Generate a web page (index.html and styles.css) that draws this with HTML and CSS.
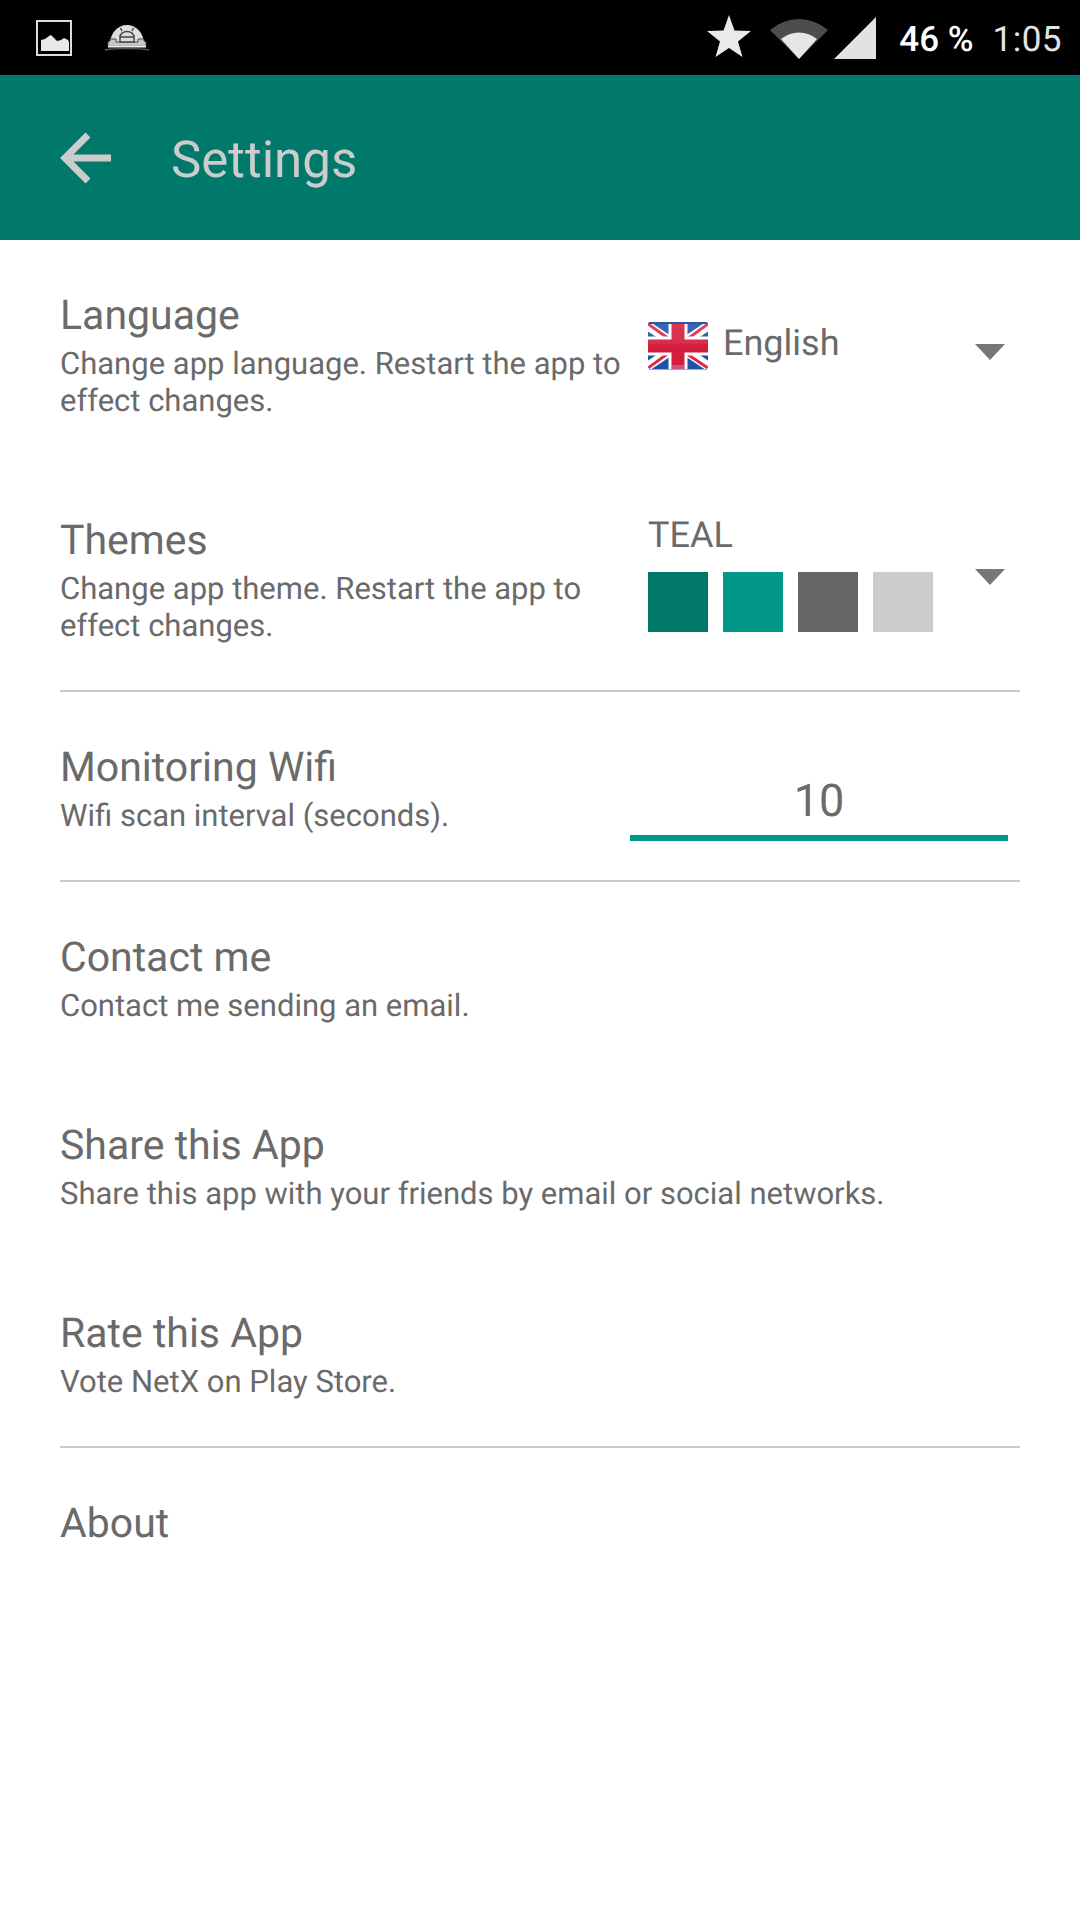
FILE: index.html
```html
<!DOCTYPE html>
<html lang="en">
<head>
<meta charset="utf-8">
<title>Settings</title>
<link rel="stylesheet" href="styles.css">
</head>
<body>
<div class="screen">
  <header class="status">
    <div class="status-left">
      <svg class="ic-pic" width="36" height="36" viewBox="0 0 36 36"><rect x="1" y="1" width="34" height="34" fill="none" stroke="#dcdcdc" stroke-width="2"/><path d="M5 31V20l4-1 4-3 2-1 4 4 2 2 4-1 3-2 4 2 1 2v9z" fill="#e8e8e8"/></svg>
      <svg class="ic-dome" width="46" height="26" viewBox="0 0 46 26">
        <path d="M6 19a17 19 0 0 1 34 0z" fill="#e0e0e0"/>
        <path d="M4 21v-4l2-1v-2h6v3h22v-3h6v2l2 1v4z" fill="#c8c8c8" stroke="#444" stroke-width="1"/>
        <path d="M16 17v-5a7 5.500 0 0 1 14 0v5z" fill="#dcdcdc" stroke="#444" stroke-width="1.500"/>
        <path d="M18 6l-1.500-3M28 6l1.500-3M16 12h14" stroke="#444" stroke-width="1.500" fill="none"/>
        <path d="M4 21.500h38" stroke="#eee" stroke-width="2"/>
        <path d="M1 25c10-2 34-2 44 0" fill="none" stroke="#555" stroke-width="1.500"/>
      </svg>
    </div>
    <div class="status-right">
      <svg class="ic-star" width="44" height="42" viewBox="0 0 44 42"><path d="M22 0l5.500 15.500L44 16 31 26.500 35.500 42 22 33 8.500 42 13 26.500 0 16l16.500-.5z" fill="#eaeaea"/></svg>
      <svg class="ic-wifi" width="58" height="42" viewBox="0 0 58 42"><path d="M0 13a44 44 0 0 1 58 0L29 42z" fill="#4d4d4d"/><path d="M11 22a28 28 0 0 1 36 0L29 42z" fill="#e6e6e6"/></svg>
      <svg class="ic-signal" width="42" height="42" viewBox="0 0 42 42"><path d="M42 0v42H0z" fill="#e2e2e2"/></svg>
      <span class="battery">46 %</span>
      <span class="clock">1:05</span>
    </div>
  </header>
  <div class="appbar">
    <svg class="back" width="52" height="52" viewBox="0 0 52 52"><path d="M51 26H6M28 3L5 26l23 23" fill="none" stroke="#cccccc" stroke-width="7"/></svg>
    <h1 class="appbar-title">Settings</h1>
  </div>
  <main class="content">
    <section class="row row-language">
      <div class="text">
        <h2 class="title">Language</h2>
        <p class="desc">Change app language. Restart the app to effect changes.</p>
      </div>
      <div class="control">
        <div class="lang">
          <svg class="flag" width="60" height="48" viewBox="0 0 60 48">
            <defs>
              <clipPath id="flagclip"><rect width="60" height="47" rx="3"/></clipPath>
              <linearGradient id="flagshine" x1="0" y1="0" x2="0" y2="1">
                <stop offset="0" stop-color="#fff" stop-opacity="0.12"/>
                <stop offset="0.45" stop-color="#fff" stop-opacity="0.08"/>
                <stop offset="0.5" stop-color="#fff" stop-opacity="0"/>
                <stop offset="1" stop-color="#fff" stop-opacity="0"/>
              </linearGradient>
            </defs>
            <g clip-path="url(#flagclip)">
              <rect width="60" height="47" fill="#1f52a8"/>
              <path d="M0 4l60 40M60 4L0 44" stroke="#fff" stroke-width="9"/>
              <path d="M0 2l24 17M60 2L38 18M0 46l22-16M60 46L36 30" stroke="#dd2a48" stroke-width="3"/>
              <path d="M30 0v47M0 24h60" stroke="#fff" stroke-width="19"/>
              <path d="M30 0v47M0 24h60" stroke="#d61c3c" stroke-width="13"/>
              <rect y="43" x="24" width="12" height="4" fill="#cf4f93"/>
              <rect width="60" height="2" y="0" fill="#123f94"/>
              <rect width="60" height="47" fill="url(#flagshine)"/>
            </g>
            <path d="M1 47.500h58" stroke="#aaa" stroke-width="1"/>
          </svg>
          <span class="value">English</span>
        </div>
        <span class="caret"></span>
      </div>
    </section>
    <section class="row row-themes">
      <div class="text">
        <h2 class="title">Themes</h2>
        <p class="desc">Change app theme. Restart the app to effect changes.</p>
      </div>
      <div class="control">
        <div class="theme">
          <span class="value">TEAL</span>
          <div class="swatches">
            <span class="swatch s1"></span>
            <span class="swatch s2"></span>
            <span class="swatch s3"></span>
            <span class="swatch s4"></span>
          </div>
        </div>
        <span class="caret"></span>
      </div>
    </section>
    <section class="row row-wifi">
      <div class="text">
        <h2 class="title">Monitoring Wifi</h2>
        <p class="desc">Wifi scan interval (seconds).</p>
      </div>
      <div class="input">10</div>
    </section>
    <section class="row row-plain">
      <h2 class="title">Contact me</h2>
      <p class="desc">Contact me sending an email.</p>
    </section>
    <section class="row row-plain">
      <h2 class="title">Share this App</h2>
      <p class="desc">Share this app with your friends by email or social networks.</p>
    </section>
    <section class="row row-plain row-rate">
      <h2 class="title">Rate this App</h2>
      <p class="desc">Vote NetX on Play Store.</p>
    </section>
    <section class="row row-plain">
      <h2 class="title">About</h2>
    </section>
  </main>
</div>
</body>
</html>
```
FILE: styles.css
```css
* { box-sizing: border-box; }
html, body { margin: 0; padding: 0; background: #fff; }
body { font-family: Roboto, "Noto Sans", sans-serif; color: #6a6a6a; text-rendering: geometricPrecision; }
h1, h2, p { margin: 0; font-weight: 400; }
.screen { width: 1080px; height: 1920px; display: flex; flex-direction: column; background: #fff; overflow: hidden; }

.status { height: 75px; background: #000; display: flex; justify-content: space-between; align-items: center; padding: 0 18px 0 36px; }
.status-left { display: flex; align-items: center; gap: 32px; }
.ic-pic { display: block; }
.ic-dome { display: block; margin-top: 1px; }
.status-right { display: flex; align-items: center; }
.ic-star { display: block; margin-right: 19px; margin-top: -3px; }
.ic-wifi { display: block; margin-right: 6px; margin-top: 0; }
.ic-signal { display: block; margin-right: 23px; margin-top: 1px; }
.battery { font-size: 35px; font-weight: 500; color: #fff; margin-right: 19px; padding-top: 3px; }
.clock { font-size: 35px; color: #e4e4e4; padding-top: 3px; letter-spacing: 0.5px; }

.appbar { height: 165px; background: #00796b; display: flex; align-items: center; padding: 0 0 0 60px; }
.back { display: block; flex: none; }
.appbar-title { font-size: 51px; color: #cccccc; margin-left: 59px; line-height: 60px; padding-top: 6px; }

.content { padding: 0 60px; display: flex; flex-direction: column; }
.title { font-size: 41px; line-height: 55px; margin-bottom: 1px; color: #6a6a6a; }
.desc { font-size: 31px; line-height: 37px; color: #6a6a6a; }
.row { display: flex; }
.text { width: 570px; flex: none; }
.row-language { height: 225px; padding-top: 49px; }
.row-themes { height: 227px; padding-top: 49px; border-bottom: 2px solid #ccc; }
.row-wifi { height: 190px; padding-top: 49px; border-bottom: 2px solid #ccc; }
.row-plain { flex-direction: column; height: 188px; padding-top: 49px; }
.row-rate { border-bottom: 2px solid #ccc; height: 190px; }

.control { flex: 1; display: flex; justify-content: space-between; padding-left: 18px; padding-right: 15px; }
.lang { display: flex; align-items: flex-start; gap: 15px; padding-top: 33px; }
.flag { display: block; }
.value { font-size: 36px; line-height: 42px; color: #6a6a6a; }
.caret { display: block; margin-top: 55px; width: 0; height: 0; border-left: 15px solid transparent; border-right: 15px solid transparent; border-top: 16px solid #777; }
.theme { display: flex; flex-direction: column; }
.swatches { display: flex; gap: 15px; margin-top: 16px; }
.swatch { display: block; width: 60px; height: 60px; }
.s1 { background: #00796b; }
.s2 { background: #009688; }
.s3 { background: #666666; }
.s4 { background: #cccccc; }
.input { width: 378px; margin-top: 34px; height: 66px; border-bottom: 6px solid #009688; text-align: center; font-size: 45px; line-height: 52px; color: #6a6a6a; }
```
